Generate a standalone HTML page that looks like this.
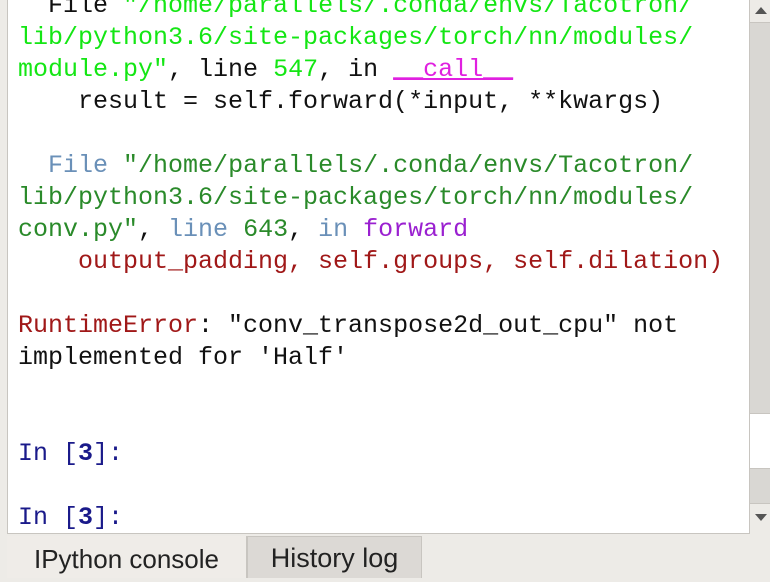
<!DOCTYPE html>
<html><head><style>
body{margin:0;width:770px;height:578px;overflow:hidden;background:#edebe7;position:relative;font-family:"Liberation Sans",sans-serif}
#con{position:absolute;left:7px;top:-2px;width:741px;height:534px;background:#fff;border:1px solid #c8c5c0;overflow:hidden}
pre{margin:0;position:absolute;left:10px;top:-9px;font-family:"Liberation Mono",monospace;font-size:25px;line-height:32px;color:#111}
.g{color:#14e614}.dg{color:#2a8a2a}.m{color:#e020e0}.bl{color:#6a90b8}.p{color:#9a20d0}.r{color:#a01818}.n{color:#1a1a8a}
#sb{position:absolute;left:749px;top:0;width:21px;height:533px;background:#d9d7d3;border-left:1px solid #c8c5c0}
.tab{position:absolute;top:536px;height:42px;line-height:46px;font-size:26px;color:#222;box-sizing:border-box;text-align:center}
</style></head><body>
<div id="con"><pre>  File <span class="g">"/home/parallels/.conda/envs/Tacotron/
lib/python3.6/site-packages/torch/nn/modules/
module.py"</span>, line <span class="g">547</span>, in <span class="m" style="text-decoration:underline">__call__</span>
    result = self.forward(*input, **kwargs)

  <span class="bl">File</span> <span class="dg">"/home/parallels/.conda/envs/Tacotron/
lib/python3.6/site-packages/torch/nn/modules/
conv.py"</span>, <span class="bl">line</span> <span class="dg">643</span>, <span class="bl">in</span> <span class="p">forward</span>
    <span class="r">output_padding, self.groups, self.dilation)</span>

<span class="r">RuntimeError</span>: "conv_transpose2d_out_cpu" not
implemented for 'Half'


<span class="n">In [<b>3</b>]:</span>

<span class="n">In [<b>3</b>]:</span></pre></div>
<div id="sb">
<div style="position:absolute;top:0;left:0;width:21px;height:22px;background:#edebe7;border-bottom:1px solid #c8c5c0"></div>
<div style="position:absolute;top:7px;left:5px;width:0;height:0;border-left:6px solid transparent;border-right:6px solid transparent;border-bottom:7px solid #555"></div>
<div style="position:absolute;top:413px;left:0;width:21px;height:54px;background:#fff;border-top:1px solid #c8c5c0;border-bottom:1px solid #c8c5c0"></div>
<div style="position:absolute;top:503px;left:0;width:21px;height:30px;background:#edebe7;border-top:1px solid #c8c5c0"></div>
<div style="position:absolute;top:514px;left:5px;width:0;height:0;border-left:6px solid transparent;border-right:6px solid transparent;border-top:7px solid #555"></div>
</div>
<div class="tab" style="left:7px;width:240px;background:#efece8;border-right:1px solid #c8c5c0">IPython console</div>
<div class="tab" style="left:247px;width:175px;background:#dcd9d5;border:1px solid #c8c5c0;border-bottom:none;line-height:42px;font-size:27px">History log</div>
</body></html>
